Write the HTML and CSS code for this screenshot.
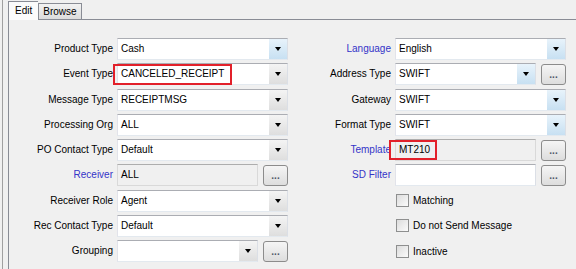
FILE: index.html
```html
<!DOCTYPE html>
<html lang="en">
<head>
<meta charset="UTF-8">
<title>Message Config</title>
<link rel="stylesheet" href="styles.css">
</head>
<body>
<div class="window">
    <div class="tabs">
        <span class="tab active">Edit</span>
        <span class="tab">Browse</span>
    </div>
    <div class="panel">
        <div class="form">
            <span class="lbl">Product Type</span>
            <div class="combo"><span class="val">Cash</span><span class="arrow hot"></span></div>
            <span class="lbl link">Language</span>
            <div class="combo"><span class="val">English</span><span class="arrow hot"></span></div>

            <span class="lbl">Event Type</span>
            <div class="mark-wrap">
                <div class="combo"><span class="val">CANCELED_RECEIPT</span><span class="arrow"></span></div>
                <span class="mark mark-event"></span>
            </div>
            <span class="lbl">Address Type</span>
            <div class="pair">
                <div class="combo"><span class="val">SWIFT</span><span class="arrow hot"></span></div>
                <a href="javascript:;" class="dots">...</a>
            </div>

            <span class="lbl">Message Type</span>
            <div class="combo"><span class="val">RECEIPTMSG</span><span class="arrow"></span></div>
            <span class="lbl">Gateway</span>
            <div class="combo"><span class="val">SWIFT</span><span class="arrow hot"></span></div>

            <span class="lbl">Processing Org</span>
            <div class="combo"><span class="val">ALL</span><span class="arrow"></span></div>
            <span class="lbl">Format Type</span>
            <div class="combo"><span class="val">SWIFT</span><span class="arrow hot"></span></div>

            <span class="lbl">PO Contact Type</span>
            <div class="combo"><span class="val">Default</span><span class="arrow"></span></div>
            <span class="lbl link">Template</span>
            <div class="pair">
                <div class="mark-wrap">
                    <div class="field ro"><span class="val">MT210</span></div>
                    <span class="mark mark-tpl"></span>
                </div>
                <a href="javascript:;" class="dots">...</a>
            </div>

            <span class="lbl link">Receiver</span>
            <div class="pair">
                <div class="field ro"><span class="val">ALL</span></div>
                <a href="javascript:;" class="dots">...</a>
            </div>
            <span class="lbl link">SD Filter</span>
            <div class="pair">
                <div class="field"><span class="val"></span></div>
                <a href="javascript:;" class="dots">...</a>
            </div>

            <span class="lbl">Receiver Role</span>
            <div class="combo"><span class="val">Agent</span><span class="arrow"></span></div>
            <span></span>
            <label class="check"><span class="box"></span>Matching</label>

            <span class="lbl">Rec Contact Type</span>
            <div class="combo"><span class="val">Default</span><span class="arrow"></span></div>
            <span></span>
            <label class="check"><span class="box"></span>Do not Send Message</label>

            <span class="lbl">Grouping</span>
            <div class="pair">
                <div class="combo"><span class="val"></span><span class="arrow"></span></div>
                <a href="javascript:;" class="dots">...</a>
            </div>
            <span></span>
            <label class="check"><span class="box"></span>Inactive</label>
        </div>
    </div>
</div>
</body>
</html>
```

FILE: styles.css
```css
body {
    margin: 0;
    height: 269px;
    overflow: hidden;
    background: #f0f0f0;
    font: 10px "Liberation Sans", Arial, sans-serif;
    color: #000;
}
.window {
    box-sizing: border-box;
    margin-left: 2px;
    padding-left: 5px;
    height: 269px;
    border-left: 1px solid #a0a0a0;
}
.tabs {
    display: flex;
    align-items: flex-end;
    height: 19px;
}
.tab {
    position: relative;
    height: 15px;
    padding: 0 4px;
    line-height: 15px;
    border: 1px solid #898c95;
    border-bottom: none;
    background: linear-gradient(#f2f2f2, #dcdcdc);
}
.tab.active {
    z-index: 1;
    height: 18px;
    margin-bottom: -1px;
    padding: 0 6px;
    line-height: 17px;
    background: #fbfbfb;
    border-right: none;
}
.panel {
    box-sizing: border-box;
    height: 250px;
    border-top: 1px solid #898c95;
    border-left: 1px solid #898c95;
    padding-top: 18px;
}
.form {
    display: grid;
    grid-template-columns: 104px 171px 99px 171px;
    grid-auto-rows: 22px;
    column-gap: 4px;
    row-gap: 3.25px;
}
.lbl {
    line-height: 22px;
    text-align: right;
    white-space: nowrap;
}
.link {
    color: #3434c8;
}
.combo, .field {
    display: flex;
    box-sizing: border-box;
    height: 22px;
    border: 1px solid #abadb3;
    border-color: #abadb3 #dbdfe6 #e3e9ef #e2e3ea;
    background: #fff;
}
.val {
    flex: 1;
    padding-left: 3px;
    line-height: 20px;
    white-space: nowrap;
}
.field.ro {
    background: #f0f0f0;
    border-color: #adadad #d9d9d9 #d9d9d9 #d9d9d9;
}
.arrow {
    display: flex;
    align-items: center;
    justify-content: center;
    width: 18px;
    background: linear-gradient(#f4f4f4, #dedede);
    border-left: 1px solid #fff;
}
.arrow.hot {
    background: linear-gradient(#e8f3fb, #c7e0f2);
}
.arrow::after {
    content: "";
    border-top: 4px solid #000;
    border-left: 3.5px solid transparent;
    border-right: 3.5px solid transparent;
}
.pair {
    display: flex;
    gap: 5px;
    align-items: center;
}
.pair > .combo, .pair > .field, .pair > .mark-wrap {
    flex: 1;
}
.dots {
    box-sizing: border-box;
    width: 25px;
    height: 21px;
    border: 1px solid #8c8c8c;
    border-radius: 3px;
    background: linear-gradient(#f5f5f5, #dddddd);
    color: #4e5868;
    text-align: center;
    line-height: 20px;
    font-size: 10px;
    font-weight: bold;
    text-decoration: none;
}
.mark-wrap {
    position: relative;
}
.mark {
    position: absolute;
    border: 2px solid #e2202a;
}
.mark-event {
    left: -4px;
    top: 1px;
    width: 115px;
    height: 17px;
}
.mark-tpl {
    left: -6px;
    top: 1px;
    width: 44px;
    height: 16px;
}
.check {
    display: flex;
    align-items: center;
    gap: 4px;
    padding-left: 1px;
}
.box {
    box-sizing: border-box;
    width: 13px;
    height: 13px;
    border: 1px solid #8e8f8f;
    background: linear-gradient(135deg, #dcdcdc, #fbfbfb);
}
```
